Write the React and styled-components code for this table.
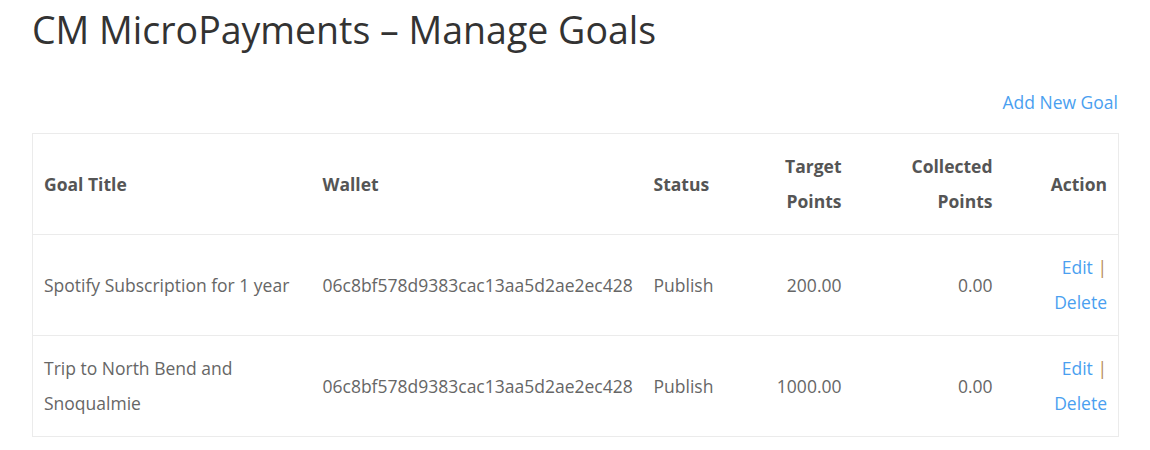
import React from "react";
import styled, { createGlobalStyle } from "styled-components";

const GlobalStyle = createGlobalStyle`
  body {
    margin: 0;
    background: #fff;
    font-family: "Open Sans", "Liberation Sans", sans-serif;
    color: #666;
  }
`;

const Page = styled.div`
  padding: 8px 32px 20px;
`;

const Title = styled.h1`
  font-size: 37.5px;
  font-weight: 400;
  line-height: 44px;
  color: #333;
  margin: 0 0 38px;
`;

const Toolbar = styled.div`
  display: flex;
  justify-content: flex-end;
  margin-bottom: 19px;
`;

const Link = styled.a`
  color: #4a9ff0;
  font-size: 17.5px;
  line-height: 24px;
  text-decoration: none;
  cursor: pointer;
`;

const Table = styled.table`
  width: 100%;
  table-layout: fixed;
  border-collapse: collapse;
  border: 1px solid #ebebeb;
  font-size: 17.5px;
  line-height: 35px;
`;

const Th = styled.th`
  text-align: ${(p) => p.$align || "left"};
  font-weight: 700;
  color: #555;
  padding: 15px 11px;
  vertical-align: middle;
`;

const Td = styled.td`
  text-align: ${(p) => p.$align || "left"};
  padding: 15px 11px;
  vertical-align: middle;
  color: #666;
  white-space: ${(p) => (p.$nowrap ? "nowrap" : "normal")};
`;

const Row = styled.tr`
  border-top: 1px solid #ebebeb;
`;

const Sep = styled.span`
  color: #b88a5a;
`;

const goals = [
  { title: "Spotify Subscription for 1 year", target: "200.00" },
  { title: "Trip to North Bend and Snoqualmie", target: "1000.00" },
];

const wallet = "06c8bf578d9383cac13aa5d2ae2ec428";
const widths = [279, 331, 93, 117, 151, 115];

export default function App() {
  return (
    <Page>
      <GlobalStyle />
      <Title>CM MicroPayments – Manage Goals</Title>
      <Toolbar>
        <Link>Add New Goal</Link>
      </Toolbar>
      <Table>
        <colgroup>
          {widths.map((w, i) => (
            <col key={i} style={{ width: w }} />
          ))}
        </colgroup>
        <thead>
          <tr>
            <Th>Goal Title</Th>
            <Th>Wallet</Th>
            <Th>Status</Th>
            <Th $align="right">
              Target
              <br />
              Points
            </Th>
            <Th $align="right">
              Collected
              <br />
              Points
            </Th>
            <Th $align="right">Action</Th>
          </tr>
        </thead>
        <tbody>
          {goals.map((g) => (
            <Row key={g.title}>
              <Td>{g.title}</Td>
              <Td $nowrap>{wallet}</Td>
              <Td>Publish</Td>
              <Td $align="right">{g.target}</Td>
              <Td $align="right">0.00</Td>
              <Td $align="right">
                <Link>Edit</Link> <Sep>|</Sep>
                <br />
                <Link>Delete</Link>
              </Td>
            </Row>
          ))}
        </tbody>
      </Table>
    </Page>
  );
}
